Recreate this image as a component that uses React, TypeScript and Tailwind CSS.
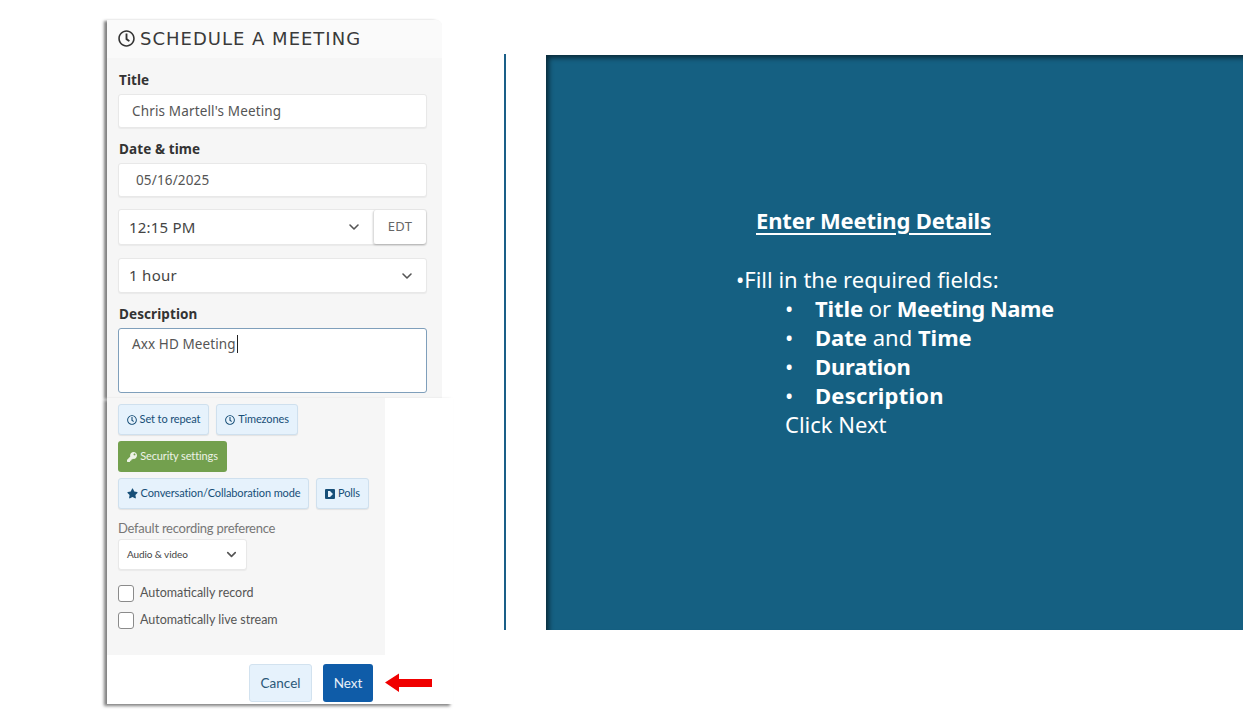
import { ChevronDown } from 'lucide-react';
import { FaKey, FaRegClock, FaStar } from 'react-icons/fa';
import { ReactNode } from 'react';

const BlueButton = ({ icon, label, width }: { icon: ReactNode; label: string; width: string }) => (
  <button className={`flex h-[31px] items-center justify-center gap-[3px] rounded-[3px] border border-[#cfe0ee] bg-[#e6f2fc] text-[11px] tracking-[-0.12px] text-[#174f78] shadow-[0_1px_1px_rgba(0,0,0,0.08)] ${width}`}>
    {icon}
    {label}
  </button>
);

const Check = ({ label }: { label: string }) => (
  <div className="flex h-[17px] items-center gap-[6px]">
    <span className="h-[17px] w-[16px] rounded-[3px] border border-[#8b8b8b] bg-white" />
    <span className="text-[12.5px] text-[#555]">{label}</span>
  </div>
);

const Label = ({ children }: { children: ReactNode }) => (
  <div className="pl-[1px] text-[13.5px] leading-[16px] font-bold tracking-[0.1px] text-[#333]">{children}</div>
);

const boxClass = 'rounded-[3px] border border-[#e8e8e8] bg-white shadow-[0_1px_1px_rgba(0,0,0,0.05)]';

export default function App() {
  return (
    <div className="flex h-[710px] w-[1258px] items-start overflow-hidden bg-white font-['Noto_Sans',sans-serif]">
      {/* left: the two cropped form screenshots */}
      <div className="mt-[20px] ml-[107px] w-[346px] shrink-0">
        <div className="h-[378px] w-[335px] rounded-tr-[6px] bg-[#f6f6f6] shadow-[-3px_1px_3px_rgba(0,0,0,0.5)]">
          <div className="flex h-[38px] items-center gap-[5px] rounded-tr-[6px] bg-[#fafafa] pb-[2px] pl-[11px]">
            <FaRegClock size={17} className="text-[#333]" />
            <span className="font-['DejaVu_Sans',sans-serif] text-[18px] tracking-[1px] text-[#3a3a3a]">SCHEDULE A MEETING</span>
          </div>
          <div className="pr-[15px] pl-[11px]">
            <div className="mt-[14px]"><Label>Title</Label></div>
            <div className={`mt-[6px] flex h-[34px] items-center pl-[13px] text-[13.5px] tracking-[0.15px] text-[#555] ${boxClass}`}>Chris Martell's Meeting</div>
            <div className="mt-[13px]"><Label>Date &amp; time</Label></div>
            <div className={`mt-[6px] flex h-[34px] items-center pl-[17px] text-[13.5px] tracking-[0.15px] text-[#555] ${boxClass}`}>05/16/2025</div>
            <div className={`mt-[12px] flex h-[36px] items-center ${boxClass}`}>
              <span className="ml-[10px] flex-1 text-[15px] tracking-[0.2px] text-[#444]">12:15 PM</span>
              <ChevronDown size={16} strokeWidth={2.4} className="mr-[11px] text-[#555]" />
              <span className="flex h-full w-[53px] items-center justify-center rounded-[3px] border-l border-[#ddd] text-[13px] tracking-[0.3px] text-[#666] shadow-[0_1px_2px_rgba(0,0,0,0.25)]">EDT</span>
            </div>
            <div className={`mt-[13px] flex h-[35px] items-center justify-between pr-[11px] pl-[10px] text-[15px] tracking-[0.3px] text-[#444] ${boxClass}`}>
              1 hour
              <ChevronDown size={16} strokeWidth={2.4} className="text-[#555]" />
            </div>
            <div className="mt-[13px]"><Label>Description</Label></div>
            <div className="mt-[6px] h-[65px] rounded-[3px] border border-[#7f9fbb] bg-white pt-[5px] pl-[13px] text-[13.5px] tracking-[0.1px] text-[#555]">
              <span className="border-r border-[#222] pr-[1px]">Axx HD Meeting</span>
            </div>
          </div>
        </div>

        <div className="h-[306px] w-[346px] bg-white font-['Lato',sans-serif] shadow-[-3px_2px_3px_rgba(0,0,0,0.5)]">
          <div className="h-[257px] w-[278px] bg-[#f6f6f6] pt-[6px] pl-[11px]">
            <div className="flex gap-[7px]">
              <BlueButton width="w-[91px]" label="Set to repeat" icon={<FaRegClock size={10} />} />
              <BlueButton width="w-[82px]" label="Timezones" icon={<FaRegClock size={10} />} />
            </div>
            <button className="mt-[6px] flex h-[31px] w-[109px] items-center justify-center gap-[3px] rounded-[3px] bg-[#73a04e] text-[11px] tracking-[-0.12px] text-[#edf3e6]">
              <FaKey size={10} />
              Security settings
            </button>
            <div className="mt-[6px] flex gap-[7px]">
              <BlueButton width="w-[191px]" label="Conversation/Collaboration mode" icon={<FaStar size={11} />} />
              <BlueButton
                width="w-[53px]"
                label="Polls"
                icon={
                  <svg width="10" height="10" viewBox="0 0 10 10">
                    <path d="M1 0h8a1 1 0 0 1 1 1v8a1 1 0 0 1-1 1H1a1 1 0 0 1-1-1V1a1 1 0 0 1 1-1zm2 2v6h2l3-3-3-3z" fill="#174f78" fillRule="evenodd" />
                  </svg>
                }
              />
            </div>
            <div className="mt-[10px] text-[13px] leading-[18px] tracking-[-0.25px] text-[#777]">Default recording preference</div>
            <div className={`mt-[2px] flex h-[31px] w-[129px] items-center justify-between pr-[7px] pl-[8px] text-[10px] tracking-[-0.1px] text-[#444] ${boxClass}`}>
              Audio &amp; video
              <ChevronDown size={15} strokeWidth={2.6} className="text-[#555]" />
            </div>
            <div className="mt-[15px] flex flex-col gap-[10px]">
              <Check label="Automatically record" />
              <Check label="Automatically live stream" />
            </div>
          </div>
          <div className="flex items-start pt-[9px] pl-[142px]">
            <button className="h-[38px] w-[63px] rounded-[3px] border border-[#d2e2ef] bg-[#e6f2fc] text-[13.5px] text-[#2b5878]">Cancel</button>
            <button className="ml-[11px] h-[38px] w-[50px] rounded-[3px] bg-[#0f5ca8] text-[13.5px] text-[#e8f0f8]">Next</button>
            <svg width="48" height="20" viewBox="0 0 48 20" className="mt-[9px] ml-[12px]">
              <path d="M0 9.500L14 0.500V6H47V14H14V19Z" fill="#f00000" />
            </svg>
          </div>
        </div>
      </div>

      <div className="mt-[54px] ml-[51px] h-[576px] w-[2px] shrink-0 bg-[#1a5f88]" />

      {/* right: the slide's text panel */}
      <div className="mt-[55px] ml-[40px] h-[575px] w-[697px] shrink-0 bg-[#156082] pt-[151px] text-[22px] leading-[29px] text-white shadow-[inset_4px_4px_5px_-1px_rgba(0,0,0,0.55)]">
        <div className="pl-[210px] font-bold tracking-[-0.15px] underline underline-offset-[4px]">Enter Meeting Details</div>
        <div className="mt-[30px] pl-[190px]">•Fill in the required fields:</div>
        <ul className="pl-[239px]">
          <li className="flex"><span className="w-[30px]">•</span><span><b className="tracking-[-0.1px]">Title</b> or <b className="tracking-[-0.5px]">Meeting Name</b></span></li>
          <li className="flex"><span className="w-[30px]">•</span><span><b>Date</b> and <b>Time</b></span></li>
          <li className="flex"><span className="w-[30px]">•</span><b className="tracking-[-0.2px]">Duration</b></li>
          <li className="flex"><span className="w-[30px]">•</span><b className="tracking-[0.25px]">Description</b></li>
          <li>Click Next</li>
        </ul>
      </div>
    </div>
  );
}
